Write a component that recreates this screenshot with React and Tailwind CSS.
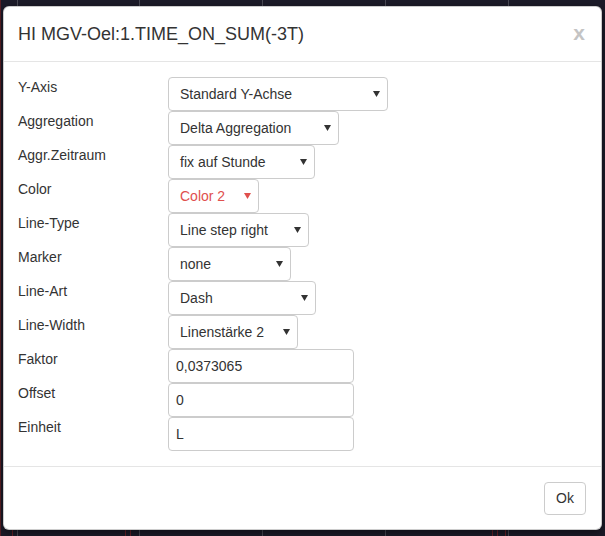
import React from "react";

const rows = [
  { label: "Y-Axis", value: "Standard Y-Achse", w: "w-[220px]", type: "select" },
  { label: "Aggregation", value: "Delta Aggregation", w: "w-[171px]", type: "select" },
  { label: "Aggr.Zeitraum", value: "fix auf Stunde", w: "w-[147px]", type: "select" },
  { label: "Color", value: "Color 2", w: "w-[91px]", type: "select", red: true },
  { label: "Line-Type", value: "Line step right", w: "w-[141px]", type: "select" },
  { label: "Marker", value: "none", w: "w-[123px]", type: "select" },
  { label: "Line-Art", value: "Dash", w: "w-[148px]", type: "select" },
  { label: "Line-Width", value: "Linenstärke 2", w: "w-[130px]", type: "select" },
  { label: "Faktor", value: "0,0373065", w: "w-[186px]", type: "input" },
  { label: "Offset", value: "0", w: "w-[186px]", type: "input" },
  { label: "Einheit", value: "L", w: "w-[186px]", type: "input" },
];

function Caret({ red }) {
  return (
    <svg width="7" height="6" viewBox="0 0 7 6" className="shrink-0">
      <path d="M0 0 L7 0 L3.5 6 Z" fill={red ? "#e0504d" : "#333"} />
    </svg>
  );
}

export default function App() {
  return (
    <div
      className="relative w-[605px] h-[536px] bg-[#1c1b29] overflow-hidden flex flex-col"
      style={{ fontFamily: '"Liberation Sans", Arial, sans-serif' }}
    >
      <svg className="absolute inset-0" width="605" height="536">
        {[17, 139, 262, 385, 508].map((x) => (
          <line key={x} x1={x + 0.5} y1="0" x2={x + 0.5} y2="536" stroke="#4a4a55" strokeWidth="1" />
        ))}
        <line x1="0.5" y1="0" x2="0.5" y2="536" stroke="#5a1f25" strokeWidth="1" />
        <line x1="12.5" y1="528" x2="12.5" y2="536" stroke="#6a2228" strokeWidth="1" />
        <line x1="125.5" y1="528" x2="125.5" y2="536" stroke="#6a2228" strokeWidth="1" />
        <line x1="130.5" y1="528" x2="130.5" y2="536" stroke="#6a2228" strokeWidth="1" />
        <line x1="492.5" y1="528" x2="492.5" y2="536" stroke="#6a2228" strokeWidth="1" />
        <line x1="497.5" y1="528" x2="497.5" y2="536" stroke="#6a2228" strokeWidth="1" />
        <line x1="505.5" y1="528" x2="505.5" y2="536" stroke="#6a2228" strokeWidth="1" />
      </svg>

      <div className="relative ml-[3px] mt-[6px] w-[599px] h-[524px] bg-white rounded-[6px] border border-[#00000033] shadow-[0_3px_9px_rgba(0,0,0,0.5)] flex flex-col">
        <div className="h-[55px] border-b border-[#e5e5e5] flex items-center justify-between pl-[14px] pr-[16px]">
          <div className="text-[18px] text-[#333] leading-none">HI MGV-Oel:1.TIME_ON_SUM(-3T)</div>
          <div className="text-[21px] font-bold text-[#c4c4c4] leading-none pb-[3px]">x</div>
        </div>

        <div className="pt-[15px] pb-[15px] px-[14px] flex flex-col">
          {rows.map((r) => (
            <div key={r.label} className="flex h-[34px]">
              <div className="w-[150px] text-[14px] leading-[20px] text-[#333]">{r.label}</div>
              <div
                className={`${r.w} h-[34px] border border-[#ccc] rounded-[4px] flex items-center text-[14px] ${
                  r.type === "select" ? "pl-[11px] pr-[7px] justify-between" : "pl-[7px]"
                } ${r.red ? "text-[#e0504d]" : "text-[#333]"} bg-white`}
              >
                <span>{r.value}</span>
                {r.type === "select" && <Caret red={r.red} />}
              </div>
            </div>
          ))}
        </div>

        <div className="border-t border-[#e5e5e5] flex-1 flex items-start justify-end pt-[15px] pr-[15px]">
          <div className="w-[42px] h-[33px] border border-[#ccc] rounded-[4px] flex items-center justify-center text-[14px] text-[#333]">
            Ok
          </div>
        </div>
      </div>
    </div>
  );
}
